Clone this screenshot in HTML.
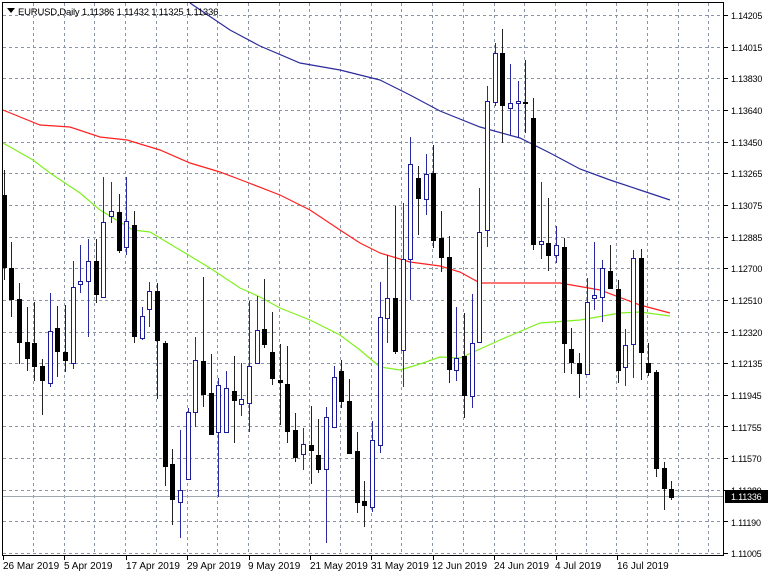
<!DOCTYPE html>
<html><head><meta charset="utf-8"><style>
html,body{margin:0;padding:0;background:#fff;width:768px;height:576px;overflow:hidden}
svg{display:block}
text{font-family:"Liberation Sans",sans-serif;font-size:10px;fill:#000}
#pl text,.pv{font-size:9px;letter-spacing:-0.2px}
</style></head><body>
<svg id="c" width="768" height="576" xmlns="http://www.w3.org/2000/svg">
<g id="grid"></g>
<g id="ma" fill="none" stroke-width="1.2">
<polyline stroke="#2b2b9c" points="190,3 230,30 260,46 300,63 340,70 380,80 410,95 440,111 480,127 520,138 550,153 580,169 610,180 640,190 670,200"/>
<polyline stroke="#ff2020" points="3,110 40,125 70,127 100,137 127,140 160,150 190,163 220,172 249,183 280,195 310,210 340,230 360,243 380,253 410,262 440,266 460,272 480,283 520,283 560,283 600,290 640,305 670,313"/>
<polyline stroke="#80f020" points="3,143 33,160 50,173 80,193 100,210 133,230 150,232 180,250 210,268 240,288 260,297 280,308 310,320 340,335 360,350 380,367 400,370 420,364 440,357 460,358 500,340 540,323 580,320 620,313 640,312 670,316"/>
</g>
<line x1="3" y1="496.5" x2="724" y2="496.5" stroke="#a0a8b4" stroke-width="1"/>
<g id="cd"></g>
<rect x="2.5" y="2.5" width="721" height="553" fill="none" stroke="#000" stroke-width="1"/>
<g id="ticks" stroke="#000"></g>
<path d="M7,8 L15,8 L11,13 Z" fill="#000"/>
<text x="18" y="15" style="font-size:9.5px;letter-spacing:-0.2px">EURUSD,Daily  1.11386 1.11432 1.11325 1.11336</text>
<g id="pl">
<text x="731" y="19">1.14205</text><text x="731" y="51">1.14015</text><text x="731" y="82">1.13830</text><text x="731" y="114">1.13640</text><text x="731" y="146">1.13450</text><text x="731" y="177">1.13265</text><text x="731" y="209">1.13075</text><text x="731" y="241">1.12885</text><text x="731" y="272">1.12700</text><text x="731" y="304">1.12510</text><text x="731" y="336">1.12320</text><text x="731" y="367">1.12135</text><text x="731" y="399">1.11945</text><text x="731" y="431">1.11755</text><text x="731" y="462">1.11570</text><text x="731" y="494">1.11380</text><text x="731" y="526">1.11190</text><text x="731" y="557">1.11005</text>
</g>
<rect x="725" y="490" width="43" height="13" fill="#000"/>
<text class="pv" x="731" y="500" style="fill:#fff">1.11336</text>
<g>
<text x="3" y="569">26 Mar 2019</text><text x="64" y="569">5 Apr 2019</text><text x="126" y="569">17 Apr 2019</text><text x="187" y="569">29 Apr 2019</text><text x="248" y="569">9 May 2019</text><text x="310" y="569">21 May 2019</text><text x="371" y="569">31 May 2019</text><text x="432" y="569">12 Jun 2019</text><text x="494" y="569">24 Jun 2019</text><text x="555" y="569">4 Jul 2019</text><text x="617" y="569">16 Jul 2019</text>
</g>
</svg>
<script>
var NS="http://www.w3.org/2000/svg";
function el(p,n,a){var e=document.createElementNS(NS,n);for(var k in a)e.setAttribute(k,a[k]);p.appendChild(e);return e;}
var g=document.getElementById('grid');
for(var k=0;k<23;k++){var x=Math.round(33+30.7*k)+0.5;el(g,'line',{x1:x,y1:3,x2:x,y2:555,stroke:'#8a96a8','stroke-dasharray':'3,3'});}
for(var k=0;k<18;k++){var y=Math.round(15+31.65*k)+0.5;el(g,'line',{x1:3,y1:y,x2:723,y2:y,stroke:'#8a96a8','stroke-dasharray':'3,3'});}
var t=document.getElementById('ticks');
for(var k=0;k<18;k++){var y=Math.round(15+31.65*k)+0.5;el(t,'line',{x1:724,y1:y,x2:728,y2:y});}
for(var k=0;k<11;k++){var x=Math.round(3+61.4*k)+0.5;el(t,'line',{x1:x,y1:556,x2:x,y2:560});}
var D=[
[170,195,268,280,0],[242,268,300,317,0],[283,299,343,364,0],[307,342,359,371,0],[302,343,367,381,0],[359,366,381,415,0],[293,331,383,387,1],[306,328,352,377,0],[305,352,361,372,0],[261,287,363,369,1],
[245,281,284,293,1],[239,261,281,337,1],[239,261,295,303,0],[177,222,297,297,1],[182,211,216,223,1],[194,212,251,253,0],[177,221,247,255,1],[211,225,337,343,0],[307,316,338,340,1],[282,291,309,327,1],
[283,291,341,399,0],[341,343,467,486,0],[449,464,500,525,0],[430,490,502,538,1],[408,412,479,479,1],[337,360,412,427,1],[277,361,395,407,0],[354,393,435,435,0],[378,385,432,497,1],[371,388,432,433,1],
[356,391,401,443,0],[363,399,404,416,1],[301,366,403,432,1],[296,330,363,363,1],[279,329,345,348,0],[312,352,379,385,0],[344,380,383,425,0],[346,384,432,443,0],[413,430,458,462,0],[428,444,454,470,1],
[406,445,451,484,0],[419,455,470,473,0],[407,417,469,543,1],[366,377,427,427,1],[360,371,402,408,0],[379,401,454,454,0],[432,451,503,513,0],[481,501,506,527,0],[421,440,507,512,1],[282,317,445,453,1],
[255,298,318,343,1],[206,298,352,354,0],[203,259,350,387,1],[137,164,259,300,1],[166,178,199,235,0],[154,174,199,215,1],[145,173,241,248,0],[211,238,258,272,0],[236,257,370,383,0],[307,358,370,381,1],
[313,356,396,418,0],[294,343,396,408,1],[188,232,342,342,1],[86,101,230,247,1],[43,53,102,106,1],[29,53,106,143,0],[64,103,108,135,1],[81,101,103,138,1],[60,102,104,133,0],[98,118,245,250,0],
[182,241,244,259,1],[198,243,256,271,0],[226,245,255,263,1],[238,247,344,373,0],[328,349,363,374,0],[353,363,374,398,0],[278,302,374,374,1],[242,295,298,310,1],[260,268,297,322,1],[245,271,289,289,0],
[280,289,371,383,0],[329,345,367,386,1],[250,258,344,378,1],[249,258,353,380,0],[343,363,373,376,0],[370,372,469,477,0],[462,468,489,510,0],[481,489,498,500,0]];
var c=document.getElementById('cd');
for(var i=0;i<D.length;i++){var d=D[i];var x=Math.round(3.5+7.675*i);
 if(d[4]){el(c,'line',{x1:x+0.5,y1:d[0],x2:x+0.5,y2:d[3],stroke:'#2a2aa0'});
  el(c,'rect',{x:x-1.5,y:d[1]+0.5,width:4,height:Math.max(1,d[2]-d[1]),fill:'#fff',stroke:'#1c1c98'});}
 else{el(c,'line',{x1:x+0.5,y1:d[0],x2:x+0.5,y2:d[3],stroke:'#222'});
  el(c,'rect',{x:x-2,y:d[1],width:5,height:Math.max(2,d[2]-d[1]),fill:'#000'});}
}
</script>
</body></html>
